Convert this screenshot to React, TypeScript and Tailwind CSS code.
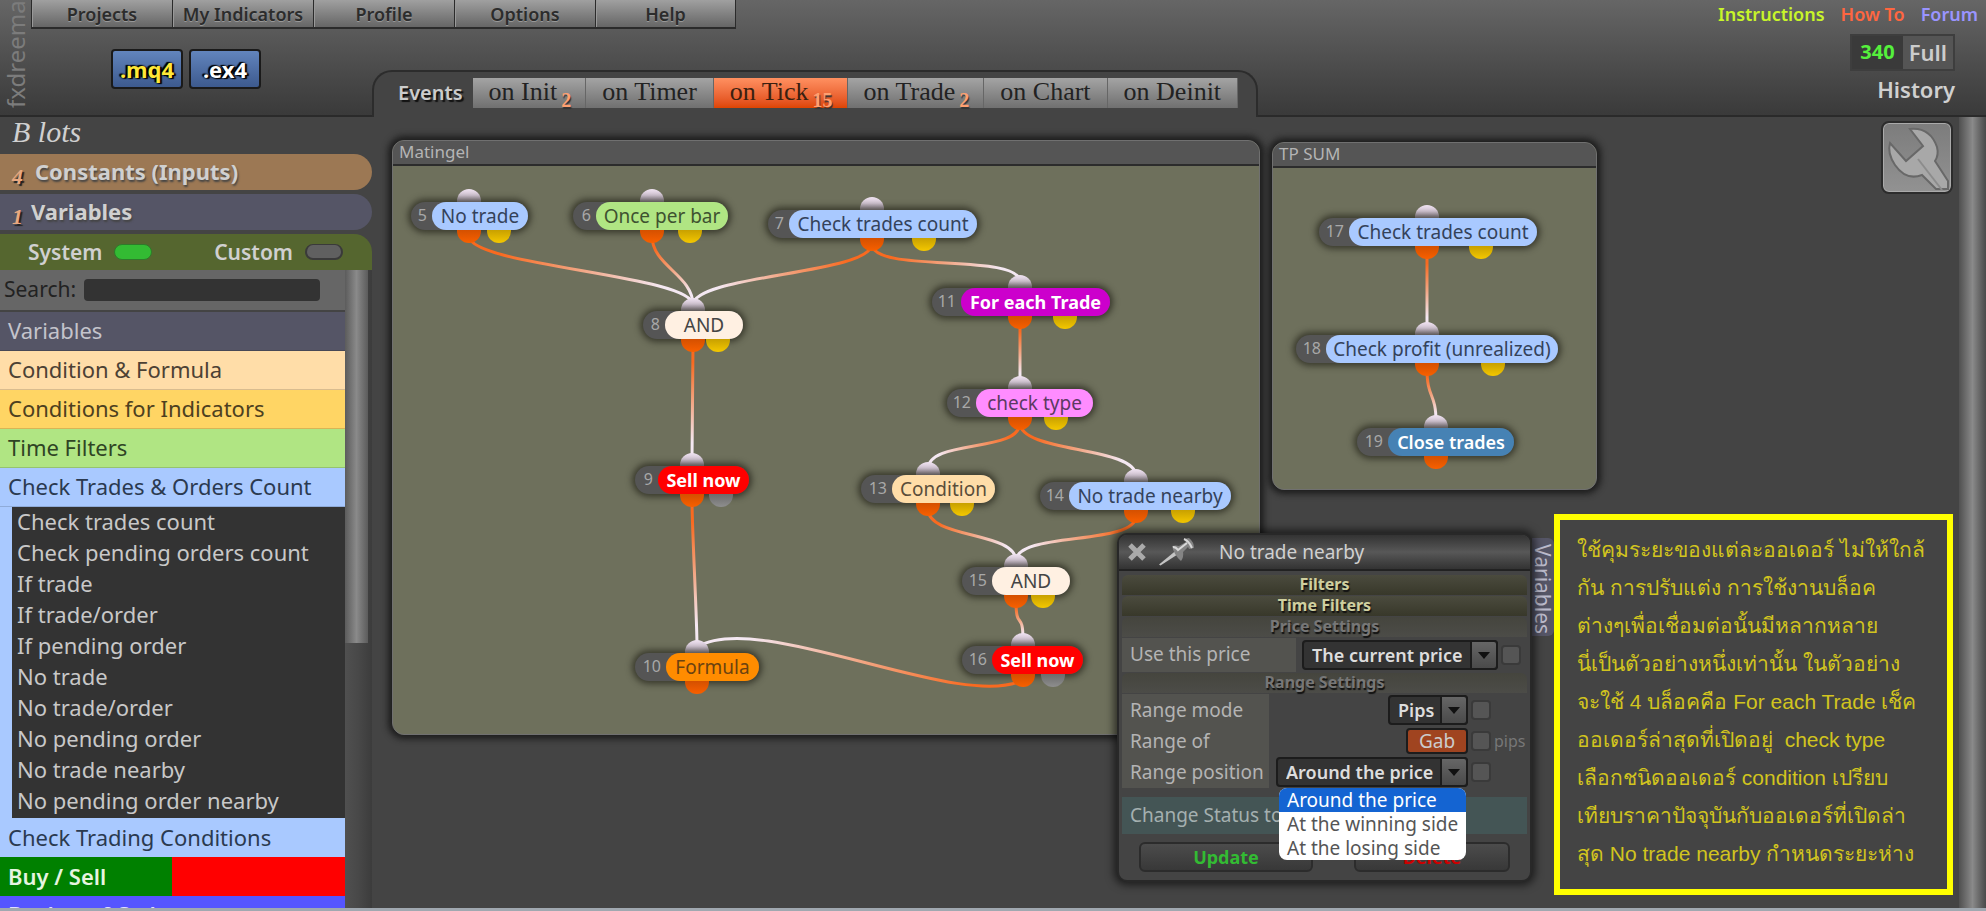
import type { ReactNode } from "react";
import clsx from "clsx";

type BlockNode = {
  id: number;
  label: string;
  x: number;
  y: number;
  pillX: number;
  pillW: number;
  port: number;
  alt?: number;
  altOff?: boolean;
  color: string;
};

const BLUE = "bg-[#a9c9ff] text-[#34425a] text-[19px]";
const CREAM = "bg-[#fff0e2] text-[#444444] text-[19px]";
const RED = "bg-[#ff0000] text-white text-lg font-bold";

const nodes: BlockNode[] = [
  { id: 5, label: "No trade", x: 39, y: 85, pillX: 60, pillW: 96, port: 97, alt: 127, color: BLUE },
  { id: 6, label: "Once per bar", x: 201, y: 85, pillX: 224, pillW: 132, port: 280, alt: 318, color: "bg-[#b0e583] text-[#3e5230] text-[19px]" },
  { id: 7, label: "Check trades count", x: 396, y: 93, pillX: 417, pillW: 188, port: 500, alt: 552, color: BLUE },
  { id: 8, label: "AND", x: 271, y: 194, pillX: 293, pillW: 78, port: 321, alt: 346, color: CREAM },
  { id: 9, label: "Sell now", x: 263, y: 349, pillX: 286, pillW: 91, port: 320, alt: 349, altOff: true, color: RED },
  { id: 10, label: "Formula", x: 263, y: 536, pillX: 294, pillW: 93, port: 325, color: "bg-[#ff8c00] text-[#6b4210] text-[19px]" },
  { id: 11, label: "For each Trade", x: 560, y: 171, pillX: 589, pillW: 149, port: 648, alt: 693, color: "bg-[#cc00cc] text-white text-lg font-bold" },
  { id: 12, label: "check type", x: 575, y: 272, pillX: 604, pillW: 117, port: 648, alt: 684, color: "bg-[#ff8cff] text-[#5c3a62] text-[19px]" },
  { id: 13, label: "Condition", x: 489, y: 358, pillX: 520, pillW: 103, port: 556, alt: 590, color: "bg-[#ffdda8] text-[#5a4d3a] text-[19px]" },
  { id: 14, label: "No trade nearby", x: 668, y: 365, pillX: 697, pillW: 162, port: 764, alt: 811, color: BLUE },
  { id: 15, label: "AND", x: 590, y: 450, pillX: 620, pillW: 78, port: 644, alt: 671, color: CREAM },
  { id: 16, label: "Sell now", x: 590, y: 529, pillX: 620, pillW: 91, port: 651, alt: 681, altOff: true, color: RED },
  { id: 17, label: "Check trades count", x: 947, y: 101, pillX: 977, pillW: 188, port: 1055, alt: 1109, color: BLUE },
  { id: 18, label: "Check profit (unrealized)", x: 924, y: 218, pillX: 954, pillW: 232, port: 1055, alt: 1121, color: BLUE },
  { id: 19, label: "Close trades", x: 985, y: 311, pillX: 1016, pillW: 126, port: 1064, color: "bg-[#4682b4] text-white text-lg font-semibold" },
];

const edges = [
  [5, 8],
  [6, 8],
  [7, 8],
  [7, 11],
  [8, 9],
  [9, 10],
  [11, 12],
  [12, 13],
  [12, 14],
  [13, 15],
  [14, 15],
  [15, 16],
  [16, 10],
  [17, 18],
  [18, 19],
];

const groups = [
  { title: "Matingel", x: 20, y: 23, w: 868, h: 595 },
  { title: "TP SUM", x: 900, y: 25, w: 325, h: 348 },
];

const menu = ["Projects", "My Indicators", "Profile", "Options", "Help"];

const events = [
  { name: "on Init", count: 2 },
  { name: "on Timer" },
  { name: "on Tick", count: 15, active: true },
  { name: "on Trade", count: 2 },
  { name: "on Chart" },
  { name: "on Deinit" },
];

const categories = [
  { name: "Variables", color: "bg-[#555566] text-[#c4c4cc]" },
  { name: "Condition & Formula", color: "bg-[#ffdda8] text-[#4c4134]" },
  { name: "Conditions for Indicators", color: "bg-[#ffd564] text-[#4d401f]" },
  { name: "Time Filters", color: "bg-[#b0e583] text-[#2f4424]" },
  { name: "Check Trades & Orders Count", color: "bg-[#a9c9ff] text-[#2b3a50]" },
];

const tradeBlocks = [
  "Check trades count",
  "Check pending orders count",
  "If trade",
  "If trade/order",
  "If pending order",
  "No trade",
  "No trade/order",
  "No pending order",
  "No trade nearby",
  "No pending order nearby",
];

const note = [
  "ใช้คุมระยะของแต่ละออเดอร์ ไม่ให้ใกล้",
  "กัน การปรับแต่ง การใช้งานบล็อค",
  "ต่างๆเพื่อเชื่อมต่อนั้นมีหลากหลาย",
  "นี่เป็นตัวอย่างหนึ่งเท่านั้น ในตัวอย่าง",
  "จะใช้ 4 บล็อคคือ For each Trade เช็ค",
  "ออเดอร์ล่าสุดที่เปิดอยู่  check type",
  "เลือกชนิดออเดอร์ condition เปรียบ",
  "เทียบราคาปัจจุบันกับออเดอร์ที่เปิดล่า",
  "สุด No trade nearby กำหนดระยะห่าง",
];

const Header = () => (
  <header className="relative shrink-0 flex justify-between h-[117px] bg-linear-to-b from-[#666666] to-[#3a3a3a] border-b-2 border-[#2a2a2a]">
    <span className="absolute left-0 top-0 h-[108px] w-8 flex items-center justify-center text-2xl leading-8 text-[#7c7c7c] [writing-mode:vertical-rl] rotate-180">
      fxdreema
    </span>
    <div className="flex flex-col justify-between">
      <nav className="flex ml-[31px] h-7">
        {menu.map((item) => (
          <a
            key={item}
            href="#"
            className="w-[141px] h-[29px] flex items-center justify-center text-lg font-semibold text-[#2c2c2c] bg-linear-to-b from-[#a0a0a0] to-[#666666] border-l border-[#2b2b2b] border-b-2 shadow-[inset_1px_0_0_#999] last:border-r [text-shadow:0_1px_0_#999]"
          >
            {item}
          </a>
        ))}
      </nav>
      <div className="flex items-end -mb-[2px]">
        <div className="w-[372px] h-[68px] pl-[111px] flex gap-1.5">
          <button className="w-[72px] h-10 rounded-sm border-2 border-[#1a1a1a] bg-linear-to-b from-[#6285bd] to-[#3d5a8e] text-[22px] leading-8 font-bold text-[#ffe838] [text-shadow:0_0_2px_#000,0_0_2px_#000,2px_1px_1px_#000,-2px_-1px_1px_#000]">
            .mq4
          </button>
          <button className="w-[72px] h-10 rounded-sm border-2 border-[#1a1a1a] bg-linear-to-b from-[#6285bd] to-[#3d5a8e] text-[22px] leading-8 font-bold text-white [text-shadow:0_0_2px_#000,0_0_2px_#000,2px_1px_1px_#000,-2px_-1px_1px_#000]">
            .ex4
          </button>
        </div>
        <div className="flex h-[47px] pl-6 pr-[18px] pt-[6px] gap-2.5 bg-[#444444] border-2 border-b-0 border-[#2c2c2c] rounded-t-[20px]">
          <span className="text-xl leading-[30px] font-semibold text-[#cccccc] [text-shadow:2px_2px_1px_#111]">Events</span>
          <div className="flex h-[30px] font-['Liberation_Serif',serif]">
            {events.map((e) => (
              <button
                key={e.name}
                className={clsx(
                  "px-4 flex gap-1 text-[26px] leading-7 border-r border-[#666666] bg-linear-to-b",
                  e.active ? "from-[#ff9060] to-[#dd4400] text-[#3a2010]" : "from-[#a4a4a4] to-[#707070] text-[#222222]"
                )}
              >
                {e.name}
                {e.count && (
                  <sub className="text-xl leading-5 self-end bottom-0 -mb-0.5 -mr-0.5 font-bold text-[#ffa070] [text-shadow:1px_2px_1px_#333]">
                    {e.count}
                  </sub>
                )}
              </button>
            ))}
          </div>
        </div>
      </div>
    </div>
    <div className="flex flex-col items-end">
      <nav className="flex gap-4 pr-2 h-[34px] items-start text-lg leading-7 font-semibold">
        <a href="#" className="text-[#c8f52a]">Instructions</a>
        <a href="#" className="text-[#ff6640]">How To</a>
        <a href="#" className="text-[#9a94ff]">Forum</a>
      </nav>
      <div className="mr-[31px] flex h-[37px] border-2 border-[#3e3e3e] bg-[#555555] leading-8">
        <span className="px-2 bg-[#3a3a3a] text-xl leading-8 font-bold text-[#55f03c]">340</span>
        <span className="px-1.5 text-[22px] font-semibold text-[#cccccc]">Full</span>
      </div>
      <a href="#" className="mr-[31px] text-[22px] leading-9 font-semibold text-[#d0d0d0]">History</a>
    </div>
  </header>
);

const Counter = ({ children }: { children: ReactNode }) => (
  <span className="font-['Liberation_Serif',serif] font-bold italic text-[22px] leading-[46px] text-[#e8a880] [text-shadow:2px_2px_1px_#222]">
    {children}
  </span>
);

const Sidebar = () => (
  <aside className="w-[372px] shrink-0 flex flex-col">
    <div className="h-[37px] pl-3 font-['Liberation_Serif',serif] italic text-[30px] leading-[30px] text-[#d0d0d0]">B lots</div>
    <div className="flex flex-col gap-1 text-[22px] leading-[34px] font-bold text-[#d0d0d0] [text-shadow:1px_2px_2px_#444]">
      <a href="#" className="h-9 pl-3 flex gap-3 rounded-r-[18px] bg-[#9c7854] overflow-hidden">
        <Counter>4</Counter> Constants (Inputs)
      </a>
      <a href="#" className="h-9 pl-3 flex gap-2 rounded-r-[18px] bg-[#555566] overflow-hidden">
        <Counter>1</Counter> Variables
      </a>
      <div className="h-9 pl-7 pr-[29px] flex justify-between rounded-tr-[18px] bg-[#55662f] text-[21px] font-semibold">
        <button className="flex items-center gap-3">
          System
          <span className="w-[38px] h-4 rounded-lg bg-[#33bb33] border border-[#2f7a2a]" />
        </button>
        <button className="flex items-center gap-3">
          Custom
          <span className="w-[38px] h-4 rounded-lg bg-[#606060] border-2 border-t border-[#3a3a3a]" />
        </button>
      </div>
    </div>
    <div className="flex flex-1 min-h-0">
      <div className="w-[345px] overflow-hidden text-[22px]">
        <div className="h-10 pl-1 flex items-center gap-2 bg-[#666666]">
          <label htmlFor="search" className="text-[21px] text-[#222222]">Search:</label>
          <input id="search" className="w-[236px] h-[22px] rounded-sm bg-[#333333] text-base text-[#cccccc] px-1" />
        </div>
        <ul className="border-t-2 border-[#444444]">
          {categories.map((c) => (
            <li key={c.name} className={clsx("h-[39px] pl-2 leading-9 border-b border-black/15", c.color)}>
              {c.name}
            </li>
          ))}
          <li className="border-l-[12px] border-[#a9c9ff] bg-[#333333] pb-px">
            <ul>
              {tradeBlocks.map((b) => (
                <li key={b} className="h-[31px] pl-[5px] leading-[29px] text-[#c8c8c8]">
                  {b}
                </li>
              ))}
            </ul>
          </li>
          <li className="h-[39px] pl-2 leading-[38px] bg-[#a9c9ff] text-[#2b3a50]">Check Trading Conditions</li>
          <li className="h-[39px] pl-2 leading-[38px] bg-linear-to-r from-[#008000] from-50% to-[#ff0000] to-50% text-[#e6f5e0] font-semibold">Buy / Sell</li>
          <li className="h-[39px] pl-2 leading-9 bg-[#5555ff] text-[#e0e0ff] font-semibold">Bucket of Orders</li>
        </ul>
      </div>
      <div className="flex-1 bg-linear-to-r from-[#505050] via-[#484848] to-[#3c3c3c]">
        <div className="w-[23px] h-[373px] bg-linear-to-r from-[#5c5c5c] via-[#8a8a8a] to-[#5c5c5c]" />
      </div>
    </div>
  </aside>
);

const Edges = () => {
  const find = (id: number) => nodes.find((n) => n.id === id)!;
  return (
    <svg className="absolute inset-0 w-full h-full" fill="none" strokeWidth="3">
      {edges.map(([from, to]) => {
        const a = find(from);
        const b = find(to);
        const x1 = a.port;
        const y1 = a.y + 34;
        const x2 = b.port;
        const y2 = b.y - 6;
        const id = `edge-${from}-${to}`;
        // a link that runs back up loops out sideways
        const d =
          y2 < y1
            ? `M${x1} ${y1} C${x1 - 63} ${y1 + 32} ${x2 + 63} ${y2 - 38} ${x2} ${y2}`
            : `M${x1} ${y1} C${x1} ${y1 + 30} ${x2} ${y2 - 30} ${x2} ${y2}`;
        return (
          <g key={id}>
            <linearGradient id={id} gradientUnits="userSpaceOnUse" x1={x1} y1={y1} x2={x2} y2={y2}>
              <stop offset="0.15" stopColor="#f96a20" />
              <stop offset="0.5" stopColor="#f2a684" />
              <stop offset="0.85" stopColor="#f4e8f2" />
            </linearGradient>
            <path d={d} stroke={`url(#${id})`} />
          </g>
        );
      })}
    </svg>
  );
};

const Block = ({ node }: { node: BlockNode }) => {
  const start = node.pillX - node.x;
  return (
    <div className="absolute h-7 flex" style={{ left: node.x, top: node.y, width: start + node.pillW }}>
      <span
        className="absolute -top-[13px] w-6 h-[14px] rounded-t-full bg-linear-to-b from-[#efe2f0] to-[#b5a8b8]"
        style={{ left: node.port - node.x - 12 }}
      />
      <div className="relative flex w-full rounded-full bg-[#555555] shadow-[0_0_6px_3px_rgba(40,40,30,0.75)]">
        <span className="text-base leading-[26px] text-[#a8a8a8] text-right pr-[5px]" style={{ width: start }}>
          {node.id}
        </span>
        <span className={clsx("flex-1 rounded-full text-center leading-7 whitespace-nowrap", node.color)}>{node.label}</span>
      </div>
      <span
        className="absolute top-7 w-6 h-[13px] rounded-b-full bg-linear-to-b from-[#d45000] to-[#f86000]"
        style={{ left: node.port - node.x - 12 }}
      />
      {node.alt && (
        <span
          className={clsx(
            "absolute top-7 w-6 h-[13px] rounded-b-full bg-linear-to-b",
            node.altOff ? "from-[#6c6c6c] to-[#8e8e8e]" : "from-[#c8a000] to-[#f4c800]"
          )}
          style={{ left: node.alt - node.x - 12 }}
        />
      )}
    </div>
  );
};

const Picker = ({ id, options, className }: { id: string; options: string[]; className: string }) => (
  <div className={clsx("relative h-[30px] flex", className)}>
    <select
      id={id}
      className="w-full appearance-none rounded-sm border-2 border-[#1c1c1c] bg-[#333333] pl-2 text-lg leading-6 font-semibold text-[#dddddd]"
    >
      {options.map((o) => (
        <option key={o}>{o}</option>
      ))}
    </select>
    <span className="pointer-events-none absolute right-0 inset-y-0 w-7 flex items-center justify-center border-2 border-[#1c1c1c] rounded-r-sm bg-linear-to-b from-[#666666] to-[#4a4a4a]">
      <svg width="12" height="7" viewBox="0 0 12 7">
        <path d="M0 0h12L6 7z" fill="#111111" />
      </svg>
    </span>
  </div>
);

const Tick = ({ label }: { label: string }) => (
  <input type="checkbox" aria-label={label} className="appearance-none w-5 h-5 shrink-0 rounded-sm bg-[#555555] border-2 border-[#3a3a3a]" />
);

const Section = ({ title, bright }: { title: string; bright?: boolean }) => (
  <h3
    className={clsx(
      "h-5 rounded-t-md text-center text-base leading-[18px] font-bold bg-linear-to-b",
      bright
        ? "from-[#4b4b3e] to-[#38382a] text-[#d0d0a0] [text-shadow:1px_2px_1px_#111]"
        : "from-[#45453e] to-[#4c4c48] text-[#777777] [text-shadow:1px_2px_1px_#111]"
    )}
  >
    {title}
  </h3>
);

const SettingsWindow = () => (
  <div className="absolute left-[745px] top-[416px] w-[415px]">
    <div className="absolute left-full top-[5px] h-[98px] w-[22px] pt-1.5 rounded-r-md bg-[#555566] text-[21px] leading-[22px] text-[#bbbbcc] [writing-mode:vertical-rl]">
      Variables
    </div>
    <section className="relative rounded-[10px] border-2 border-[#282828] bg-[#444444] pb-2 shadow-[0_0_8px_3px_rgba(0,0,0,0.6)] text-[19px] text-[#b4b4b4]">
      <div className="h-9 pl-2 flex items-center gap-3 rounded-t-lg border-b-2 border-[#222222] bg-linear-to-b from-[#333333] via-[#585858] to-[#333333]">
        <button aria-label="Close">
          <svg width="20" height="20" viewBox="0 0 20 20">
            <path d="M3 3l14 14M17 3L3 17" stroke="#aaaaaa" strokeWidth="5" />
          </svg>
        </button>
        <button aria-label="Pin">
          <svg width="36" height="28" viewBox="0 0 36 28">
            <path d="M0 26.500l17-14 3 3L1.500 27.500z" fill="#c4c4c4" />
            <path d="M13 8q4-1 7 0l7-4-2-3 5-1q5 4 5 10l-5 1-1-2-5 5q1 5-2 9-7-6-9-15z" fill="#848484" />
            <path d="M14 9q3 0 5 3l9-7M25 1q5 2 8 9" stroke="#d8d8d8" strokeWidth="2" fill="none" />
          </svg>
        </button>
        <h2 className="pl-3 text-[#d0d0d0]">No trade nearby</h2>
      </div>
      <div className="px-[3px] pt-1 flex flex-col gap-px">
        <Section title="Filters" bright />
        <Section title="Time Filters" bright />
        <Section title="Price Settings" />
        <div className="h-[34px] flex items-center">
          <label htmlFor="price" className="w-[174px] h-full pl-2 leading-8 bg-[#53534f]">Use this price</label>
          <Picker id="price" options={["The current price"]} className="ml-1.5 mr-[3px] w-[196px]" />
          <Tick label="Use this price from constant" />
        </div>
        <Section title="Range Settings" />
        <div className="flex">
          <div className="w-[147px] shrink-0 pl-2 flex flex-col whitespace-nowrap bg-[#53534f]">
            <label htmlFor="mode" className="leading-8">Range mode</label>
            <label htmlFor="gab" className="leading-[30px]">Range of</label>
            <label htmlFor="position" className="leading-8">Range position</label>
          </div>
          <div className="flex-1 flex flex-col items-end">
            <div className="flex h-8 items-center gap-[3px] pr-9">
              <Picker id="mode" options={["Pips"]} className="w-20" />
              <Tick label="Range mode from constant" />
            </div>
            <div className="flex h-[30px] items-center gap-[3px]">
              <input
                id="gab"
                readOnly
                value="Gab"
                className="w-[62px] h-[26px] rounded-sm border-2 border-[#1c1c1c] bg-[#a04420] text-center text-[19px] text-[#cccccc]"
              />
              <Tick label="Range from constant" />
              <span className="w-[33px] text-base text-[#777777]">pips</span>
            </div>
            <div className="relative flex h-8 items-center gap-[3px] pr-9">
              <Picker id="position" options={["Around the price", "At the winning side", "At the losing side"]} className="w-48" />
              <Tick label="Range position from constant" />
              <ul role="listbox" className="absolute left-[3px] top-full w-[187px] z-10 rounded-lg overflow-hidden bg-white text-[19px] leading-6 text-[#555555]">
                <li role="option" aria-selected="true" className="pl-2 bg-[#1464d2] text-white">Around the price</li>
                <li role="option" aria-selected="false" className="pl-2">At the winning side</li>
                <li role="option" aria-selected="false" className="pl-2">At the losing side</li>
              </ul>
            </div>
          </div>
        </div>
        <div className="mt-2 h-[37px] pl-2 leading-9 bg-[#445555] text-[#a4b0b0]">Change Status to</div>
      </div>
      <div className="mt-2 px-5 flex justify-between text-lg font-bold">
        <button className="w-[174px] h-[30px] rounded-md border-2 border-[#2c2c2c] bg-linear-to-b from-[#4c4c4c] to-[#383838] leading-6 text-[#33bb33]">
          Update
        </button>
        <button className="w-[156px] h-[30px] rounded-md border-2 border-[#2c2c2c] bg-linear-to-b from-[#4c4c4c] to-[#383838] leading-6 text-[#cc0000]">
          Delete
        </button>
      </div>
    </section>
  </div>
);

const Canvas = () => (
  <main className="relative flex-1 min-w-0 overflow-hidden">
    {groups.map((g) => (
      <section
        key={g.title}
        className="absolute rounded-xl overflow-hidden bg-[#6e705c] border border-[#707070] shadow-[0_0_6px_4px_rgba(20,20,20,0.8)]"
        style={{ left: g.x, top: g.y, width: g.w, height: g.h }}
      >
        <h2 className="h-[25px] pl-1.5 bg-[#555555] border-b-2 border-[#2c2c2c] text-[17px] leading-[22px] text-[#b4b4b4]">{g.title}</h2>
      </section>
    ))}
    <Edges />
    {nodes.map((n) => (
      <Block key={n.id} node={n} />
    ))}
    <button
      aria-label="Tools"
      className="absolute right-1.5 top-1 w-[72px] h-[73px] rounded-lg border-2 border-[#2c2c2c] bg-linear-to-b from-[#7c7c7c] to-[#929292] shadow-[inset_0_0_0_1px_#aaa]"
    >
      <svg viewBox="0 0 66 69" className="w-full h-full">
        <path
          d="M26 6Q46 4 53 24Q55 32 51 38L64 58V66H52L38 52Q22 58 11 42Q3 30 6 20L22 38L39 23Z"
          fill="#a8a8a8"
          stroke="#686868"
          strokeWidth="2"
        />
        <path d="M34 36L58 67" stroke="#8c8c8c" strokeWidth="2" />
      </svg>
    </button>
    <SettingsWindow />
    <div className="absolute left-[1182px] top-[397px] w-[399px] h-[381px] border-[6px] border-[#ffff00] bg-[#444444] pl-[17px] pt-[11px] font-['Liberation_Sans','Noto_Sans',sans-serif] text-[21px] leading-[38px] text-[#d2c41e] whitespace-pre">
      {note.map((line) => (
        <p key={line}>{line}</p>
      ))}
    </div>
  </main>
);

export default function App() {
  return (
    <div className="h-screen flex flex-col overflow-hidden bg-[#444444] border-b-[3px] border-[#a0a8b0] font-['Noto_Sans',sans-serif]">
      <Header />
      <div className="flex flex-1 min-h-0">
        <Sidebar />
        <Canvas />
        <div className="w-[27px] shrink-0 bg-linear-to-r from-[#505050] via-[#8a8a8a] to-[#4a4a4a]" />
      </div>
    </div>
  );
}
